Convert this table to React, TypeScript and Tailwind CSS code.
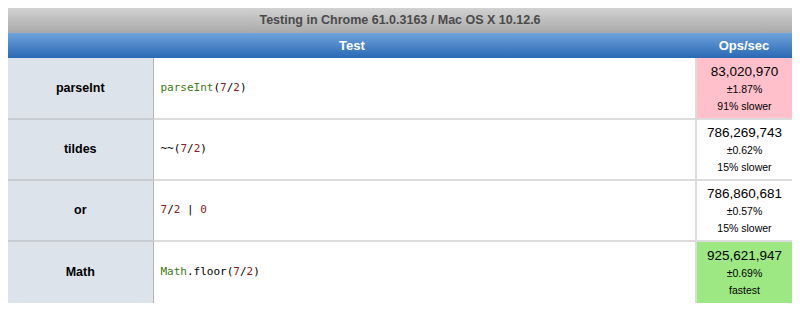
const rows = [
  {
    name: 'parseInt',
    code: (
      <>
        <span className="text-[#3f7a12]">parseInt</span>(<span className="text-[#8a1d1d]">7</span>/<span className="text-[#8a1d1d]">2</span>)
      </>
    ),
    ops: '83,020,970',
    rme: '±1.87%',
    note: '91% slower',
    bg: 'bg-[#ffc0cb]',
  },
  {
    name: 'tildes',
    code: (
      <>
        ~~(<span className="text-[#8a1d1d]">7</span>/<span className="text-[#8a1d1d]">2</span>)
      </>
    ),
    ops: '786,269,743',
    rme: '±0.62%',
    note: '15% slower',
    bg: 'bg-white',
  },
  {
    name: 'or',
    code: (
      <>
        <span className="text-[#8a1d1d]">7</span>/<span className="text-[#8a1d1d]">2</span> | <span className="text-[#8a1d1d]">0</span>
      </>
    ),
    ops: '786,860,681',
    rme: '±0.57%',
    note: '15% slower',
    bg: 'bg-white',
  },
  {
    name: 'Math',
    code: (
      <>
        <span className="text-[#3f7a12]">Math</span>.floor(<span className="text-[#8a1d1d]">7</span>/<span className="text-[#8a1d1d]">2</span>)
      </>
    ),
    ops: '925,621,947',
    rme: '±0.69%',
    note: 'fastest',
    bg: 'bg-[#9de883]',
  },
];

export default function App() {
  return (
    <div className="w-[800px] h-[310px] bg-white p-2 font-['Liberation_Sans',Arial,sans-serif]">
      <table className="w-[784px] border-collapse table-fixed">
        <colgroup>
          <col className="w-[145px]" />
          <col />
          <col className="w-[96px]" />
        </colgroup>
        <thead>
          <tr>
            <th
              colSpan={3}
              className="h-[25px] p-0 text-[12.5px] font-bold text-[#4a4a4a] bg-gradient-to-b from-[#d2d2d2] to-[#a9a9a9] leading-none"
            >
              Testing in Chrome 61.0.3163 / Mac OS X 10.12.6
            </th>
          </tr>
          <tr className="bg-gradient-to-b from-[#6ea3dc] to-[#2a69b3]">
            <th colSpan={2} className="h-[25px] p-0 text-[13px] font-bold text-white leading-none">
              Test
            </th>
            <th className="h-[25px] p-0 text-[13px] font-bold text-white leading-none">Ops/sec</th>
          </tr>
        </thead>
        <tbody>
          {rows.map((r, i) => {
            const last = i === rows.length - 1;
            return (
              <tr key={r.name} className={last ? '' : 'border-b-2 border-[#dcdcdc]'}>
                <td
                  className={`${last ? 'h-[62px]' : 'h-[61px] border-b-2 border-b-[#c6cbd1]'} p-0 bg-[#dde3ea] border-r border-[#b5b5b5] text-center text-[12.5px] font-bold text-black`}
                >
                  {r.name}
                </td>
                <td className="p-0 pl-[7px] border-r-2 border-[#dcdcdc] font-['DejaVu_Sans_Mono',monospace] text-[11px] text-black">
                  {r.code}
                </td>
                <td className={`p-0 text-center text-black ${r.bg}`}>
                  <div className="text-[13.5px] leading-[18px]">{r.ops}</div>
                  <div className="text-[10.5px] leading-[17px]">{r.rme}</div>
                  <div className="text-[10.5px] leading-[16px]">{r.note}</div>
                </td>
              </tr>
            );
          })}
        </tbody>
      </table>
    </div>
  );
}
